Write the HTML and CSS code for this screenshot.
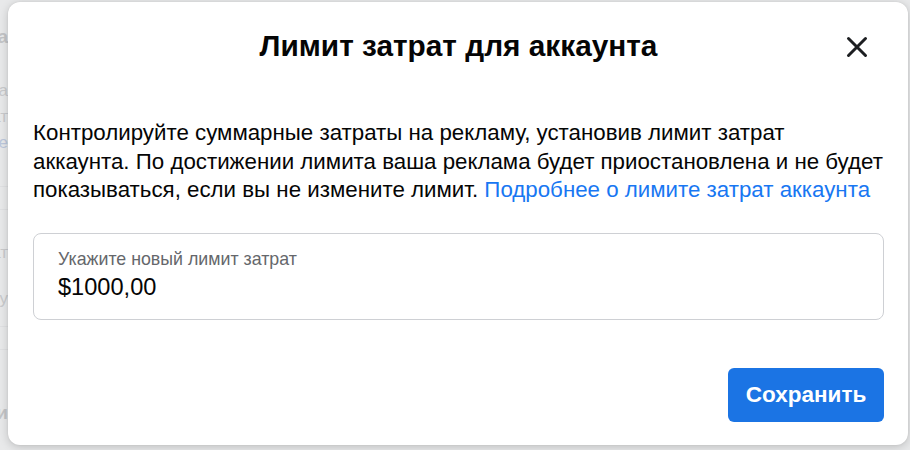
FILE: index.html
```html
<!DOCTYPE html>
<html lang="ru">
<head>
<meta charset="utf-8">
<title>Лимит затрат для аккаунта</title>
<link rel="stylesheet" href="styles.css">
</head>
<body>
<div class="page">
  <div class="bg-line bg-head">Лимит затрат аккаунта</div>
  <div class="bg-line bg-t1">Контролируйте затраты на</div>
  <div class="bg-line bg-t2">рекламу с лимитом затрат</div>
  <div class="bg-line bg-link">Подробнее</div>
  <div class="bg-sep"></div>
  <div class="bg-line bg-t3">Сумма затрат</div>
  <div class="bg-line bg-t4">по аккаунту</div>
  <div class="bg-sep bg-sep2"></div>
  <div class="bg-line bg-head2">Платежи</div>
</div>

<div class="modal" role="dialog">
  <div class="modal-header">
    <div></div>
    <h1 class="modal-title">Лимит затрат для аккаунта</h1>
    <button class="close" aria-label="Закрыть">
      <svg width="22" height="22" viewBox="0 0 22 22"><path d="M2.5 2.5 L19.5 19.5 M19.5 2.5 L2.5 19.5" stroke="#1c1e21" stroke-width="3" stroke-linecap="round" fill="none"/></svg>
    </button>
  </div>
  <p class="modal-text">Контролируйте суммарные затраты на рекламу, установив лимит затрат аккаунта. По достижении лимита ваша реклама будет приостановлена и не будет показываться, если вы не измените лимит. <a class="link" href="#">Подробнее о лимите затрат аккаунта</a></p>
  <div class="field">
    <div class="field-label">Укажите новый лимит затрат</div>
    <div class="field-value">$1000,00</div>
  </div>
  <div class="modal-footer">
    <button class="save">Сохранить</button>
  </div>
</div>
</body>
</html>
```

FILE: styles.css
```css
html, body {
  margin: 0;
  padding: 0;
}
body {
  width: 910px;
  height: 450px;
  overflow: hidden;
  background: #e8e9ea;
  font-family: "Liberation Sans", Arial, Helvetica, sans-serif;
  color: #1c1e21;
}

.page {
  margin-left: -120px;
  padding-top: 24px;
  width: 128px;
  overflow: hidden;
  color: #c9cacc;
  font-size: 17px;
}
.bg-line {
  display: flex;
  justify-content: flex-end;
  white-space: nowrap;
  line-height: 26px;
}
.bg-head { font-weight: bold; color: #c3c4c6; font-size: 19px; }
.bg-t1 { margin-top: 28px; }
.bg-link { color: #bcc7dc; }
.bg-sep {
  margin-top: 30px;
  height: 22px;
  border-top: 1px solid #dfe0e2;
  border-bottom: 1px solid #dfe0e2;
}
.bg-t3 { margin-top: 30px; }
.bg-t4 { margin-top: 20px; }
.bg-sep2 { margin-top: 14px; }
.bg-head2 { margin-top: 50px; font-weight: bold; font-size: 19px; color: #c3c4c6; }

.modal {
  position: absolute;
  left: 8px;
  top: 2px;
  width: 900px;
  height: 443px;
  box-sizing: border-box;
  background: #fff;
  border-radius: 12px;
  box-shadow: 0 2px 10px rgba(0, 0, 0, 0.18), 0 0 2px rgba(0, 0, 0, 0.08);
  padding: 0 24px 0 25px;
  display: flex;
  flex-direction: column;
}

.modal-header {
  display: grid;
  grid-template-columns: 1fr auto 1fr;
  padding-top: 26px;
}
.modal-title {
  margin: 0;
  font-size: 29.8px;
  line-height: 36px;
  font-weight: bold;
  color: #050505;
  white-space: nowrap;
}
.close {
  justify-self: end;
  align-self: start;
  margin-top: 8px;
  margin-right: 16px;
  padding: 0;
  border: 0;
  background: none;
  width: 22px;
  height: 22px;
  display: flex;
}

.modal-text {
  margin: 55px 0 0;
  font-size: 22.3px;
  line-height: 28.5px;
  color: #050505;
}
.link {
  color: #1877f2;
  text-decoration: none;
}

.field {
  margin-top: 28px;
  height: 87px;
  box-sizing: border-box;
  border: 1px solid #ced0d4;
  border-radius: 8px;
  padding: 14px 24px 0;
}
.field-label {
  font-size: 17.8px;
  line-height: 22px;
  color: #65676b;
}
.field-value {
  margin-top: 3px;
  font-size: 23.6px;
  line-height: 28px;
  color: #050505;
}

.modal-footer {
  margin-top: 48px;
  display: flex;
  justify-content: flex-end;
}
.save {
  width: 156px;
  height: 54px;
  border: 0;
  border-radius: 6px;
  background: #1b74e4;
  color: #fff;
  font-family: "Liberation Sans", Arial, Helvetica, sans-serif;
  font-size: 22.5px;
  font-weight: bold;
  padding: 0;
}
```
